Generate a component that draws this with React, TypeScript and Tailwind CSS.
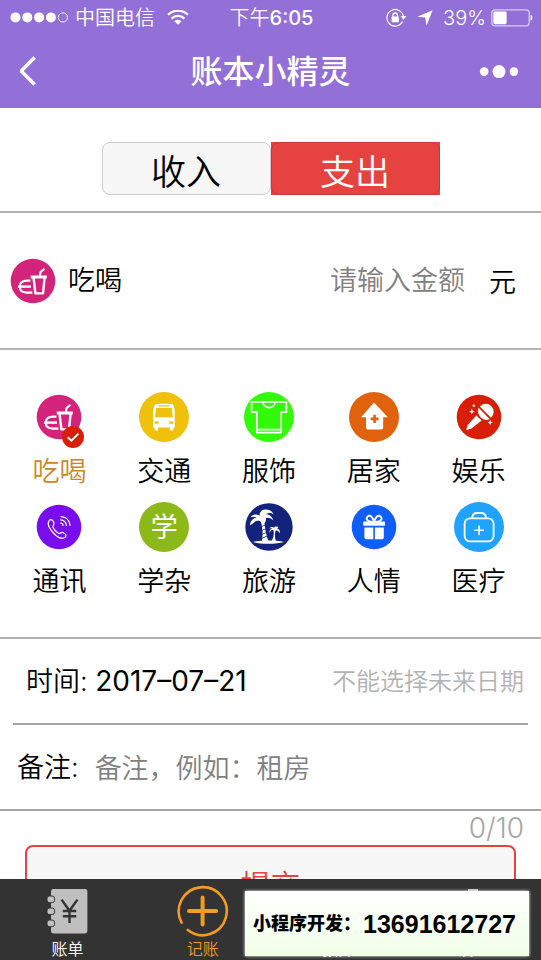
import { useState } from "react";
import type { ReactNode } from "react";

type Category = { name: string; icon: ReactNode };

const categories: Category[] = [
  { name: "吃喝", icon: <FoodIcon /> },
  { name: "交通", icon: <BusIcon /> },
  { name: "服饰", icon: <ShirtIcon /> },
  { name: "居家", icon: <HomeIcon /> },
  { name: "娱乐", icon: <MicIcon /> },
  { name: "通讯", icon: <PhoneIcon /> },
  { name: "学杂", icon: <StudyIcon /> },
  { name: "旅游", icon: <PalmIcon /> },
  { name: "人情", icon: <GiftIcon /> },
  { name: "医疗", icon: <MedicalIcon /> },
];

export default function App() {
  const [selected, setSelected] = useState("吃喝");
  const [note, setNote] = useState("");
  const current = categories.find((c) => c.name === selected) ?? categories[0];

  return (
    <div className="relative flex h-screen flex-col overflow-hidden bg-white font-['Inter','Noto_Sans_CJK_SC',sans-serif] text-black">
      <header className="shrink-0 bg-[#9270d8] text-white">
        <StatusBar />
        <div className="grid h-[72px] grid-cols-[1fr_auto_1fr] items-center px-5">
          <button type="button" aria-label="返回" className="w-8">
            <svg width="18" height="32" viewBox="0 0 18 32" fill="none" stroke="currentColor" strokeWidth="3.6">
              <path d="M14.6 1.4 1.2 15 14.6 28.6" />
            </svg>
          </button>
          <h1 className="text-[32px] leading-10 font-medium">账本小精灵</h1>
          <button type="button" aria-label="更多" className="justify-self-end">
            <svg width="42" height="16" viewBox="0 0 42 16" fill="currentColor">
              <circle cx="5.2" cy="7.6" r="4.3" />
              <circle cx="20" cy="7.6" r="6.5" />
              <circle cx="34.9" cy="7.6" r="4.3" />
            </svg>
          </button>
        </div>
      </header>

      <main className="min-h-0 flex-1 overflow-hidden">
        {/* Income / expense switch */}
        <div className="flex justify-center border-b-2 border-[#b2b2b2] pt-[34px] pb-4">
          <button
            type="button"
            className="h-[53px] w-[169px] rounded-lg border border-[#ccc] bg-[#f7f7f7] pt-2 text-[35px] leading-none font-[350]"
          >
            收入
          </button>
          <button type="button" className="h-[53px] w-[169px] bg-[#e64340] text-[35px] leading-none font-[350] text-white">
            <span className="flex h-full items-center justify-center rounded-lg border border-[#c43a38] pt-2">支出</span>
          </button>
        </div>

        {/* Amount */}
        <div className="flex h-[137px] items-center border-b-2 border-[#b2b2b2] pr-[25px] pl-2">
          {current.icon}
          <label htmlFor="amount" className="ml-[10px] shrink-0 text-[27px] leading-10 font-[350]">
            {selected}
          </label>
          <input
            id="amount"
            placeholder="请输入金额"
            className="mr-6 min-w-0 flex-1 bg-transparent text-right text-[27px] leading-10 font-[350] outline-none placeholder:text-[#808080]"
          />
          <span className="pt-1 text-[27px] leading-10 font-[350]">元</span>
        </div>

        {/* Categories */}
        <div className="grid grid-cols-5 gap-y-[10px] border-b-2 border-[#b2b2b2] pt-[42px] pr-[10px] pb-[35px] pl-[7px] text-[27px] leading-10 font-[350]">
          {categories.map((c) => (
            <button
              key={c.name}
              type="button"
              onClick={() => setSelected(c.name)}
              className="flex flex-col items-center gap-[10px]"
            >
              <span className="relative">
                {c.icon}
                {c.name === selected && <CheckBadge />}
              </span>
              <span className={c.name === selected ? "text-[#cb871f]" : undefined}>{c.name}</span>
            </button>
          ))}
        </div>

        {/* Date */}
        <div className="mx-[13px] flex h-[86px] items-center justify-between border-b-2 border-[#a6a6a6] pr-1 pl-[13px] font-[350]">
          <span className="text-[27px] leading-10">
            时间: <time dateTime="2017-07-21" className="text-[28px] font-normal">2017–07–21</time>
          </span>
          <span className="pt-[2px] text-2xl leading-10 text-[#b2b2b2]">不能选择未来日期</span>
        </div>

        {/* Note */}
        <div className="flex h-[86px] items-center border-b-2 border-[#a6a6a6] px-[17px] pt-[2px] text-[27px] leading-10 font-[350]">
          <label htmlFor="note" className="shrink-0">
            备注:
          </label>
          <input
            id="note"
            maxLength={10}
            value={note}
            onChange={(e) => setNote(e.target.value)}
            placeholder="备注，例如：租房"
            className="ml-4 min-w-0 flex-1 bg-transparent pt-[2px] outline-none placeholder:text-[#808080]"
          />
        </div>
        <div className="pr-[17px] text-right text-[28px] leading-[34px] font-[350] text-[#a6a6a6]">{note.length}/10</div>

        <button
          type="button"
          className="mr-[25px] ml-[25px] block h-20 w-[calc(100%-50px)] rounded-lg border-2 border-[#e64340] bg-[#f7f7f7] text-[30px] leading-none font-[350] text-[#e64340]"
        >
          提交
        </button>
      </main>

      <nav className="grid h-[81px] shrink-0 grid-cols-4 bg-[#333] text-white">
        <Tab label="账单" icon={<LedgerIcon />} />
        <Tab label="记账" active icon={<AddIcon />} />
        <Tab label="预算" icon={<CoinIcon />} />
        <Tab label="设置" icon={<GearIcon />} />
      </nav>

      {/* Contact banner floats over the tab bar */}
      <aside className="absolute right-3 bottom-1 flex h-[65px] items-center bg-linear-to-b from-white to-[#f0ffe6] pr-[13px] pl-2 whitespace-nowrap shadow-[0_0_3px_#fff]">
        <span className="w-[110px] text-lg leading-6 font-black">小程序开发：</span>
        <span className="font-['Liberation_Sans',sans-serif] text-[25px] leading-8 font-bold">13691612727</span>
      </aside>
    </div>
  );
}

function StatusBar() {
  return (
    <div className="grid h-9 grid-cols-[1fr_auto_1fr] items-center pr-2 pl-[10px] text-xl leading-6 font-[350]">
      <div className="flex items-center">
        <svg width="59" height="12" viewBox="0 0 59 12" fill="currentColor">
          <circle cx="5.5" cy="5.4" r="5" />
          <circle cx="17.3" cy="5.4" r="5" />
          <circle cx="29.1" cy="5.4" r="5" />
          <circle cx="40.9" cy="5.4" r="5" />
          <circle cx="52.9" cy="5.4" r="4.6" fill="none" stroke="currentColor" strokeWidth="0.9" />
        </svg>
        <span className="ml-[6px]">中国电信</span>
        <svg className="ml-3" width="22" height="17" viewBox="0 0 22 17" fill="none" stroke="currentColor" strokeWidth="2.2">
          <path d="M1 4.8a14.2 14.2 0 0 1 20 0" />
          <path d="M4.6 8.6a9.1 9.1 0 0 1 12.8 0" />
          <path d="M11 14.8 7.4 11.2a5.1 5.1 0 0 1 7.2 0Z" fill="currentColor" stroke="none" />
        </svg>
      </div>
      <span>
        下午<span className="font-medium">6:05</span>
      </span>
      <div className="flex items-center justify-end">
        <svg width="21" height="20" viewBox="0 0 21 20" fill="none" stroke="currentColor" strokeWidth="1.2">
          <path d="M16.6 13.6A8.3 8.3 0 1 1 17.4 8.5" />
          <path d="M14.6 8h5.8l-2.9 3.8Z" fill="currentColor" stroke="none" />
          <rect x="5.6" y="8.6" width="7.2" height="5.6" rx="0.6" fill="currentColor" stroke="none" />
          <path d="M7 9V7.2a2.2 2.2 0 0 1 4.4 0V9" strokeWidth="1.3" />
        </svg>
        <svg className="ml-[10px]" width="16" height="16" viewBox="0 0 16 16" fill="currentColor">
          <path d="M15.6.2 9.6 15.4 8.2 7.6.4 6.8Z" />
        </svg>
        <span className="ml-[10px]">39%</span>
        <svg className="ml-[5px]" width="42" height="18" viewBox="0 0 42 18">
          <rect x="0.8" y="0.8" width="37.4" height="16" rx="3" fill="none" stroke="#d8ccf2" strokeWidth="1.3" />
          <rect x="2.4" y="2.4" width="13.2" height="12.8" rx="1.4" fill="#fff" />
          <path d="M39.6 5.8c2.4.6 2.4 5.4 0 6Z" fill="#fff" />
        </svg>
      </div>
    </div>
  );
}

function Tab({ label, icon, active }: { label: string; icon: ReactNode; active?: boolean }) {
  return (
    <a href="#" className={active ? "flex flex-col items-center pt-[6px] text-[#f39c1f]" : "flex flex-col items-center pt-[6px]"}>
      {icon}
      <span className="text-base leading-6 font-[350]">{label}</span>
    </a>
  );
}

function Disc({ color, r = 25, children }: { color: string; r?: number; children: ReactNode }) {
  return (
    <svg className="block shrink-0" width="50" height="50" viewBox="0 0 50 50" fill="none" aria-hidden="true">
      <circle cx="25" cy="25" r={r} fill={color} />
      {children}
    </svg>
  );
}

function CheckBadge() {
  return (
    <svg className="absolute right-0 -bottom-1.5" width="22" height="22" viewBox="0 0 22 22" fill="none">
      <circle cx="11" cy="11" r="11" fill="#d81e06" />
      <path d="M5.6 11.2 9.4 14.6 16.4 7.6" stroke="#fff" strokeWidth="1.9" />
    </svg>
  );
}

function FoodIcon() {
  return (
    <Disc color="#d4237a" r={22.3}>
      <g stroke="#fff" strokeWidth="2.1" strokeLinejoin="round">
        <path d="M22.8 21H38.8" strokeWidth="3" />
        <path d="M25.6 22 27.4 37.4H35L36.6 22" strokeWidth="2.4" />
        <path d="M31.8 20 32.6 16 36.4 12.8" />
        <path d="M22.4 24.6H19.4C15 24.6 11.8 26.6 11.8 30.6 11.8 34.8 14.8 36.6 18.6 36.6H24.4" />
        <path d="M10 30.6H23" strokeWidth="2.4" />
      </g>
    </Disc>
  );
}

function BusIcon() {
  return (
    <Disc color="#efc10a">
      <path
        fill="#fff"
        fillRule="evenodd"
        d="M16.6 12.6C18 11.6 32 11.6 33.4 12.6 35.4 13.6 35.4 17 35.8 22V35.4H34.4V37.6C34.4 39.2 30.8 39.2 30.8 37.6V35.4H19.2V37.6C19.2 39.2 15.6 39.2 15.6 37.6V35.4H14V22C14.4 17 14.6 13.6 16.6 12.6ZM19.4 13.2V14.4H30.6V13.2ZM17.2 16 16 25.2H33.8L32.8 16ZM15.6 29.4V31.8H19.6V29.4ZM30.2 29.4V31.8H34.2V29.4Z"
      />
    </Disc>
  );
}

function ShirtIcon() {
  return (
    <Disc color="#32fb0a">
      <g stroke="#fff" strokeWidth="1.7">
        <path d="M7.6 10H42.4V20.2H37.2V40.6H12.8V20.2H7.6Z" />
        <path d="M18.8 10C19.6 17.4 30.4 17.4 31.2 10" />
        <path d="M12.8 37.6H37.2" />
      </g>
    </Disc>
  );
}

function HomeIcon() {
  return (
    <Disc color="#e0620d">
      <path fill="#fff" d="M25 10.4 38.8 25.2H34.2V35A2.6 2.6 0 0 1 31.6 37.6H19.6A2.6 2.6 0 0 1 17 35V25.2H12.2Z" />
      <path d="M25.6 22.8V31M21.6 26.9H29.6" stroke="#e0620d" strokeWidth="2.6" />
    </Disc>
  );
}

function MicIcon() {
  return (
    <Disc color="#d81e06" r={22.3}>
      <g fill="#fff">
        <path d="M25.8 14.4A8 8 0 1 1 37 25.8Z" />
        <path d="M24.6 15.8 35.6 27C32.8 28.6 29.4 28 26.8 25.4 24.2 22.8 23.2 19 24.6 15.8Z" />
        <path d="M22.4 23.4 27.6 28.6 16.8 37 15 37 13.4 38.4 12 37 13.2 35.6 13.2 33.6Z" />
        <path d="M17.8 16.6 18.6 18.8 20.6 19.6 18.6 20.4 17.8 22.6 17 20.4 15 19.6 17 18.8Z" />
        <path d="M36.2 27.8 37 29.8 38.8 30.4 37 31.2 36.2 33 35.4 31.2 33.6 30.4 35.4 29.8Z" />
        <circle cx="19.8" cy="13.8" r="1.2" />
      </g>
      <path d="M24.8 14.8 36.4 26.6" stroke="#d81e06" strokeWidth="1" />
    </Disc>
  );
}

function PhoneIcon() {
  return (
    <Disc color="#7a0dee" r={22.3}>
      <g stroke="#fff" strokeWidth="1.2" strokeLinecap="round" strokeLinejoin="round">
        <path d="M15.4 18.4C16.8 16.8 18.6 18 19.8 20.4 21 22.8 18.2 23.2 19 25.2 20 27.8 22 30 24.4 31.2 26.6 32.2 27 29.4 29.4 30.8 31.8 32.2 33 33.8 31.2 35.2 28.4 37.2 24.4 35.8 20.6 32.2 15.6 27.6 12.4 21.8 15.4 18.4Z" />
        <path d="M26.4 21C28 21 29 22.2 29 23.6" />
        <path d="M26.6 17.8C30 18 32 20.2 32.4 23.4" />
        <path d="M27 14.6C32.2 14.8 35.6 18.4 36 23.4" />
      </g>
    </Disc>
  );
}

function StudyIcon() {
  return (
    <span className="flex size-[50px] items-center justify-center rounded-full bg-[#8cb919] text-[27px] leading-none font-normal text-white">
      学
    </span>
  );
}

function PalmIcon() {
  return (
    <Disc color="#13227a" r={23.7}>
      <g fill="#fff">
        <path d="M17 20C15.6 18.4 12.6 18.2 10.4 20.2 8.6 21.4 7.4 22.8 6 23.4 6 19.4 9 16 12.6 15.6 10.8 14.4 8.4 14.4 6.6 15.2 8 12.6 12.4 11.4 15.8 13.8 15.2 10.6 17 7.6 21 7.4 25 7.4 28 8.6 29.6 12.4 26.8 10.6 24 10.8 22 12 25.2 12.2 28.4 14.8 29.4 18.6 26.6 15.6 24 15.4 21.8 16.2 22.4 18.4 21.4 20.6 19.6 21.6Z" />
        <path d="M17 20H20.4C20.8 26 22.2 33 24.4 39.2H17.8C19 33 18.8 26 17 20Z" />
        <path d="M29.6 28.6C27.6 27.2 26.2 29 25.6 31 25 28.4 26.4 26.6 28.4 26.8 27.6 26 26.4 26.2 25.4 26.6 26.4 24.8 28.8 24.6 30 25.8 31 24.2 33.4 24 34.8 25.8 33.8 25.6 33 26 32.4 26.4 34.8 26.4 36.4 28.4 35.8 31.4 34.8 29 33.2 28.2 31.6 28.6 30.6 32 30.8 36 32 39.2H27.6C29.4 36 30.2 32 29.6 28.6Z" />
        <path d="M9.2 40C14 38.4 20 38.6 24.6 38.4 30 38.4 36 38.6 40 40 33 42.4 16 42.4 9.2 40Z" />
      </g>
      <path d="M17.4 24.6 21.6 23M18.2 28.4 22.4 26.6M18 32.4 23 30.2M17.6 36.4 24 33.6" stroke="#13227a" strokeWidth="0.8" />
    </Disc>
  );
}

function GiftIcon() {
  return (
    <Disc color="#0f5efb" r={22.3}>
      <g fill="#fff">
        <rect x="14.2" y="19.4" width="21.8" height="4.4" rx="0.8" />
        <path d="M15.4 25.4H24.3V37.2H17A1.6 1.6 0 0 1 15.4 35.6Z" />
        <path d="M25.9 25.4H34.8V35.6A1.6 1.6 0 0 1 33.2 37.2H25.9Z" />
      </g>
      <g stroke="#fff" strokeWidth="1.9">
        <path d="M25.1 20C19.6 20 17 18.2 17.8 15.8 18.6 13.4 21 13 22.6 14.8 24 16.4 24.6 18 25.1 20Z" />
        <path d="M25.1 20C30.6 20 33.2 18.2 32.4 15.8 31.6 13.4 29.2 13 27.6 14.8 26.2 16.4 25.6 18 25.1 20Z" />
      </g>
    </Disc>
  );
}

function MedicalIcon() {
  return (
    <Disc color="#20a2ff">
      <g stroke="#fff" strokeWidth="1.8" strokeLinecap="round">
        <rect x="10.6" y="16.4" width="29" height="23" rx="5.4" />
        <path d="M18 16.2C18.4 12.8 20.2 11 23 11H27.2C30 11 31.8 12.8 32.2 16.2" />
        <path d="M25.1 24V32.4M20.9 28.2H29.3" strokeWidth="1.6" />
      </g>
    </Disc>
  );
}

function LedgerIcon() {
  return (
    <svg width="52" height="52" viewBox="0 0 52 52" fill="none">
      <rect x="9" y="4" width="36.4" height="44.4" rx="2.4" fill="#bfbfbf" />
      <g fill="#bfbfbf" stroke="#333" strokeWidth="1">
        <rect x="5" y="11" width="7.6" height="6.6" rx="2.4" />
        <rect x="5" y="23" width="7.6" height="6.6" rx="2.4" />
        <rect x="5" y="35" width="7.6" height="6.6" rx="2.4" />
      </g>
      <path d="M19.6 14.6 27.5 25.8 35.4 14.6M27.5 25.8V38M20.8 26H34.2M20.8 31.2H34.2" stroke="#333" strokeWidth="2.4" />
    </svg>
  );
}

function AddIcon() {
  return (
    <svg width="52" height="52" viewBox="0 0 52 52" fill="none" stroke="#f39c1f" strokeLinecap="round">
      <path d="M4.6 37.6A24 24 0 1 1 10.8 45" strokeWidth="2.6" />
      <path d="M25.6 12.4V39.6M12 26H39.2" strokeWidth="4" />
    </svg>
  );
}

function CoinIcon() {
  return (
    <svg width="52" height="52" viewBox="0 0 52 52" fill="none" stroke="#bfbfbf" strokeWidth="2.4">
      <circle cx="26" cy="28" r="19" />
      <path d="M19 18 26 27 33 18M26 27V38M20 28H32M20 33H32" />
    </svg>
  );
}

function GearIcon() {
  return (
    <svg width="52" height="52" viewBox="0 0 52 52" fill="none" stroke="#bfbfbf" strokeWidth="2">
      <path d="M22 10V5H30V10" />
      <circle cx="26" cy="28" r="17" />
      <circle cx="26" cy="28" r="6" />
    </svg>
  );
}
